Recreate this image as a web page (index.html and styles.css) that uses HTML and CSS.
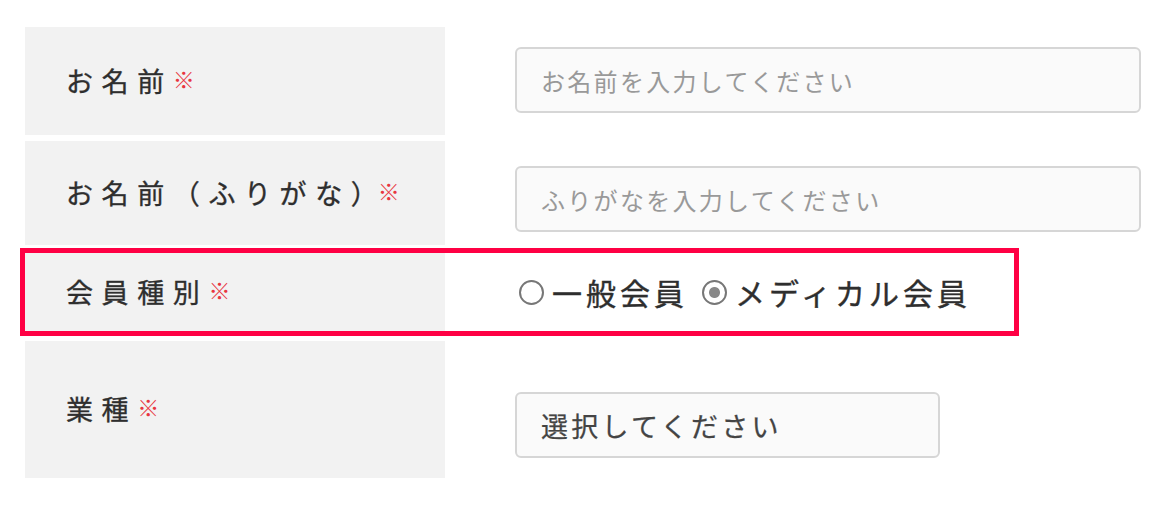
FILE: index.html
```html
<!DOCTYPE html>
<html lang="ja">
<head>
    <meta charset="UTF-8">
    <meta name="viewport" content="width=device-width, initial-scale=1.0">
    <title>会員登録</title>
    <link rel="stylesheet" href="styles.css">
</head>
<body>
    <form class="entry">
        <div class="row row-name">
            <div class="label">お名前<span class="req">※</span></div>
            <div class="field">
                <input type="text" class="text" placeholder="お名前を入力してください">
            </div>
        </div>

        <div class="row row-kana">
            <div class="label">お名前（ふりがな<span class="tight">）</span><span class="req">※</span></div>
            <div class="field">
                <input type="text" class="text" placeholder="ふりがなを入力してください">
            </div>
        </div>

        <div class="row row-type">
            <div class="label">会員種別<span class="req">※</span></div>
            <div class="field radios">
                <label class="radio"><input type="radio" name="type">一般会員</label>
                <label class="radio"><input type="radio" name="type" checked>メディカル会員</label>
            </div>
        </div>

        <div class="row row-job">
            <div class="label">業種<span class="req">※</span></div>
            <div class="field">
                <select class="select">
                    <option>選択してください</option>
                </select>
            </div>
        </div>
    </form>
</body>
</html>
```

FILE: styles.css
```css
body {
    margin: 0;
    background: #fff;
    color: #333;
    font-family: "Noto Sans CJK JP", sans-serif;
}
.entry {
    padding: 27px 0 0 25px;
}
.row {
    display: flex;
    align-items: flex-start;
}
.label {
    width: 420px;
    box-sizing: border-box;
    background: #f2f2f2;
    padding-left: 41px;
    font-size: 27px;
    line-height: 30px;
    letter-spacing: 8.6px;
    color: #2e2e2e;
    -webkit-text-stroke: 0.35px #2e2e2e;
}
.tight {
    letter-spacing: 0;
}
.req {
    color: #e8363f;
    font-size: 22px;
    line-height: 20px;
    letter-spacing: 0;
    vertical-align: 4px;
    -webkit-text-stroke: 0;
}
.field {
    padding-left: 70px;
}
.text, .select {
    box-sizing: border-box;
    height: 66px;
    border: 2px solid #d6d6d6;
    border-radius: 6px;
    background: #fafafa;
    padding: 0 24px;
    font-family: inherit;
    color: #444;
    outline: none;
}
.text {
    width: 626px;
    font-size: 24px;
    letter-spacing: 2.3px;
}
.text::placeholder {
    color: #999;
}
.select {
    width: 425px;
    appearance: none;
    -webkit-appearance: none;
    font-size: 27px;
    letter-spacing: 3.3px;
    -webkit-text-stroke: 0.25px #444;
}

/* rows */
.row-name .label { padding-top: 39px; padding-bottom: 39px; }
.row-name .field { padding-top: 20px; }
.row-kana { margin-top: 6px; }
.row-kana .label { padding-top: 37px; padding-bottom: 37px; }
.row-kana .field { padding-top: 25px; }
.row-type {
    margin-top: 8px;
    width: 989px;
    outline: 5px solid #ff0044;
}
.row-type .label { padding-top: 24px; padding-bottom: 24px; }
.row-job { margin-top: 10px; }
.row-job .label { padding-top: 53px; padding-bottom: 54px; }
.row-job .field { padding-top: 51px; }

.radios {
    align-self: center;
    display: flex;
    gap: 14px;
    padding-left: 74px;
}
.radio {
    display: flex;
    align-items: center;
    font-size: 30px;
    letter-spacing: 4px;
    color: #2e2e2e;
    -webkit-text-stroke: 0.4px #2e2e2e;
}
.radio input {
    appearance: none;
    -webkit-appearance: none;
    width: 25px;
    height: 25px;
    margin: 0 8px 0 0;
    border: 2px solid #777;
    border-radius: 50%;
    background: #fff;
    box-sizing: border-box;
}
.radio input:checked {
    background: radial-gradient(circle, #888 0 5px, #fff 6px);
}
```
